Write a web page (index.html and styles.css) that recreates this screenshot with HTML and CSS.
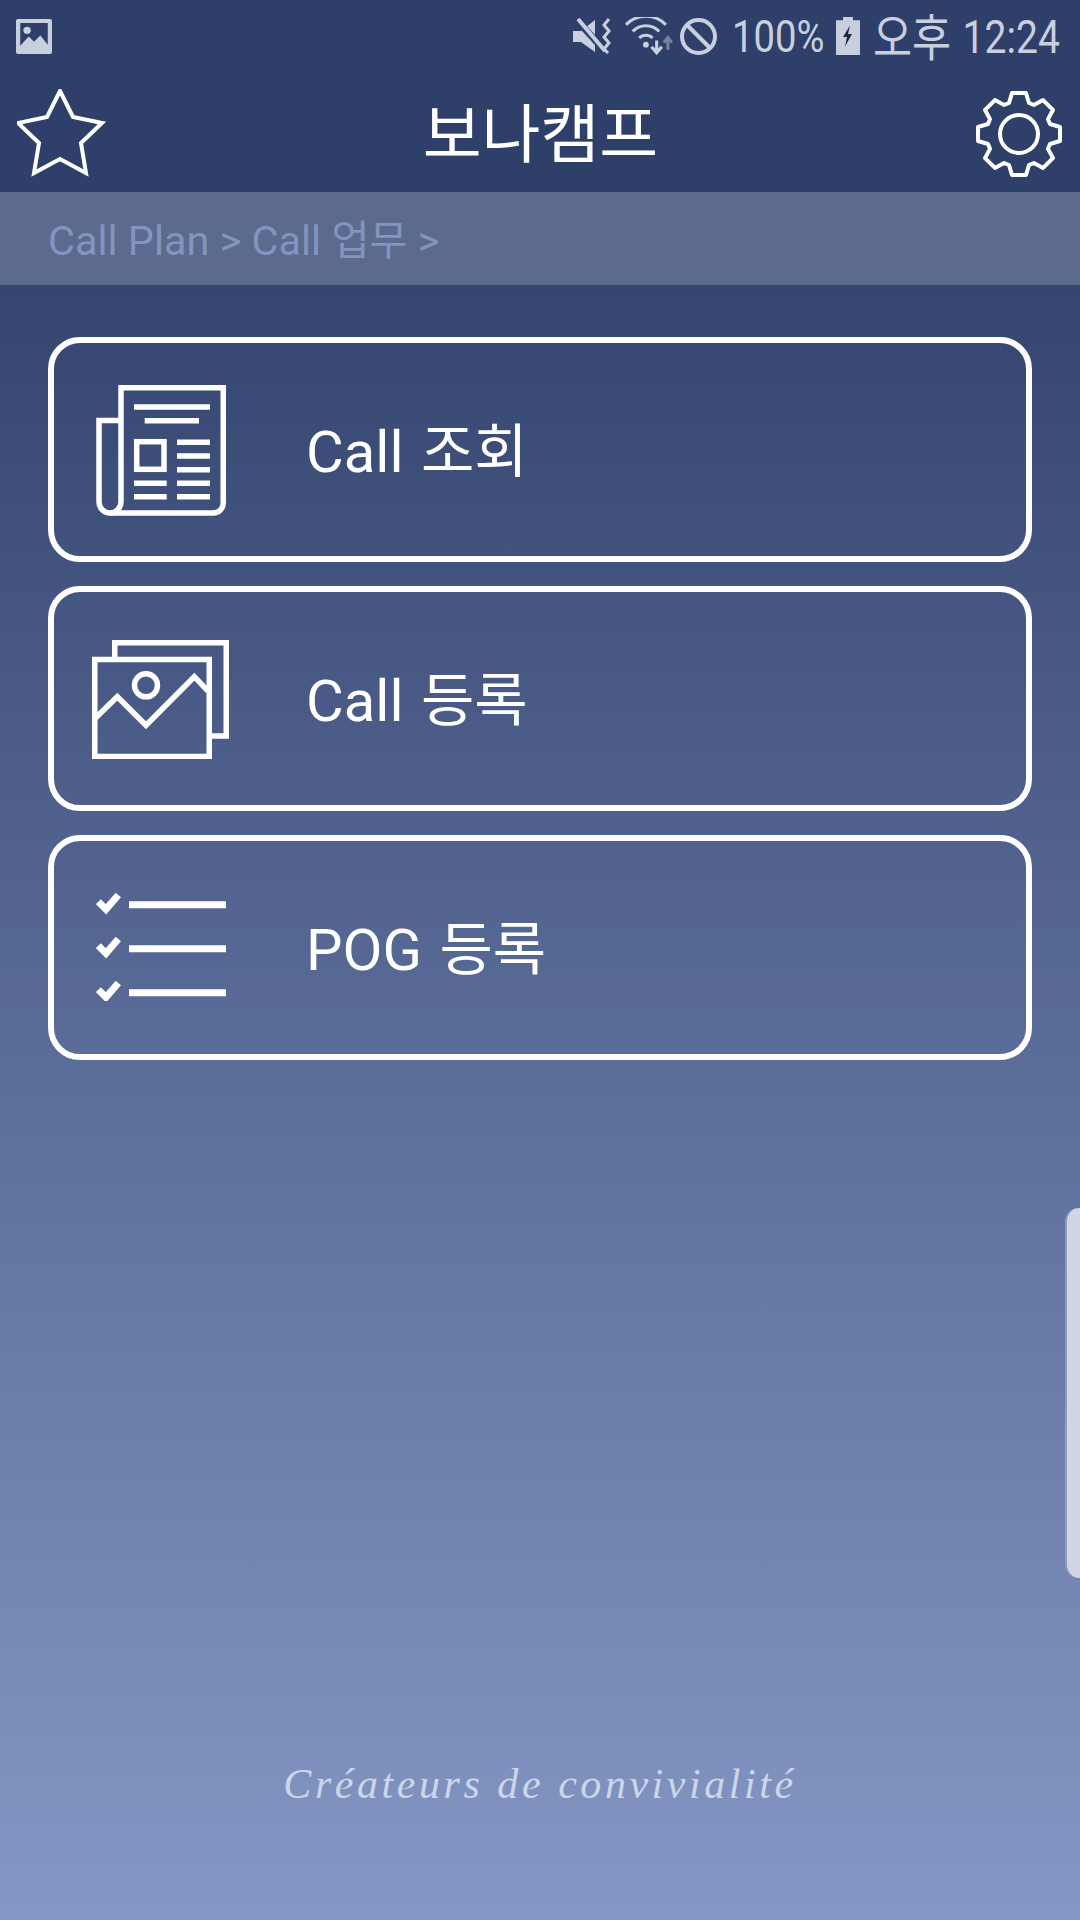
FILE: index.html
```html
<!DOCTYPE html>
<html lang="ko">
<head>
    <meta charset="UTF-8">
    <meta name="viewport" content="width=device-width, initial-scale=1.0">
    <title>보나캠프</title>
    <link rel="stylesheet" href="styles.css">
</head>
<body>
    <div id="app">
        <div id="top">
            <div id="status">
                <svg class="ico-picture" width="36" height="35" viewBox="0 0 34 34" preserveAspectRatio="none">
                    <rect width="34" height="34" rx="2" fill="#c9cfdf"/>
                    <path d="M4 4h26v21l-7-9-6 6-5-5-8 9z" fill="#2e4069"/>
                    <circle cx="10.500" cy="11" r="3.500" fill="#c9cfdf"/>
                </svg>
                <div id="statusRight">
                    <svg class="ico-mute" width="38" height="36" viewBox="0 0 38 36">
                        <path d="M0 13h8l14-11v32l-14-10h-8z" fill="#c9cfdf"/>
                        <path d="M2 0l30 33" stroke="#2e4069" stroke-width="7"/>
                        <path d="M5 1l27 32" stroke="#c9cfdf" stroke-width="4"/>
                        <path d="M36 1l-5 6 5 6-5 6 5 6-5 6 4 4" fill="none" stroke="#c9cfdf" stroke-width="3"/>
                    </svg>
                    <svg class="ico-wifi" width="49" height="38" viewBox="0 0 48 37">
                        <g fill="none" stroke="#c9cfdf" stroke-width="3">
                            <path d="M1 7.500a27 27 0 0 1 39 0"/>
                            <path d="M7.500 14a18 18 0 0 1 26 0"/>
                            <path d="M14 20.500a9 9 0 0 1 13 0"/>
                        </g>
                        <circle cx="20.500" cy="27" r="2.800" fill="#c9cfdf"/>
                        <path d="M31 23v12M26 29l5 6 5-6" fill="none" stroke="#c9cfdf" stroke-width="3"/>
                        <path d="M42 32v-11M38 25l4-5 4 5" fill="none" stroke="#75819f" stroke-width="3"/>
                    </svg>
                    <svg class="ico-block" width="37" height="37" viewBox="0 0 37 37">
                        <circle cx="18.500" cy="18.500" r="16.500" fill="none" stroke="#c9cfdf" stroke-width="4"/>
                        <path d="M7 7l23 23" stroke="#c9cfdf" stroke-width="4"/>
                    </svg>
                    <span class="status-text pct">100%</span>
                    <svg class="ico-battery" width="24" height="38" viewBox="0 0 24 36" preserveAspectRatio="none">
                        <path d="M7 0h10v3h7v33h-24v-33h7z" fill="#c9cfdf"/>
                        <path d="M14 8l-7 11h4l-2 9 7-12h-4z" fill="#1c2740"/>
                    </svg>
                    <span class="status-text clock"><span class="ampm">오후</span> 12:24</span>
                </div>
            </div>
            <header id="titleBar">
                <svg width="90" height="90" viewBox="0 0 90 90">
                    <path d="M43 2l13 26 29 6-21 20 5 30-26-14-26 14 5-30-21-20 29-6z" fill="none" stroke="#fff" stroke-width="4"/>
                </svg>
                <h1>보나캠프</h1>
                <svg width="90" height="90" viewBox="-45 -45 90 90">
                    <path d="M-10-31L-7-41L7-41L10-31L14.850-29L24.040-33.940L33.940-24.040L29-14.850L31-10L41-7L41 7L31 10L29 14.850L33.940 24.040L24.040 33.940L14.850 29L10 31L7 41L-7 41L-10 31L-14.850 29L-24.040 33.940L-33.940 24.040L-29 14.850L-31 10L-41 7L-41-7L-31-10L-29-14.850L-33.940-24.040L-24.040-33.940L-14.850-29Z" fill="none" stroke="#fff" stroke-width="4" stroke-linejoin="round"/>
                    <circle r="19" fill="none" stroke="#fff" stroke-width="4"/>
                </svg>
            </header>
        </div>
        <div id="main">
            <div id="crumb">Call Plan &gt; Call 업무 &gt;</div>
            <div id="menu">
                <a class="card">
                    <span class="card-icon icon-down">
                        <svg width="130" height="131" viewBox="0 0 130 131">
                            <g fill="none" stroke="#fff" stroke-width="5.500">
                                <path d="M25 117V2.750H127.250V118a10 10 0 0 1-10 10H14a11 11 0 0 1-11-11V35.500H25"/>
                                <path d="M25 117a11 11 0 0 1-11 11"/>
                                <path d="M38 22H114M48.700 35.700H103M81 57.300H114M81 71H114M81 84.700H114M81 98.300H114M81 111.700H114M38 98.300H70.700M38 111.700H70.700"/>
                                <rect x="40.700" y="56.700" width="27.300" height="27.600"/>
                            </g>
                        </svg>
                    </span>
                    <span class="card-label">Call 조회</span>
                </a>
                <a class="card">
                    <span class="card-icon icon-down icon-gallery">
                        <svg width="137" height="119" viewBox="0 0 137 119">
                            <g fill="none" stroke="#fff" stroke-width="5.500">
                                <rect x="2.750" y="19.500" width="114.500" height="97"/>
                                <path d="M22.750 17V2.750H134.250V96H120"/>
                                <circle cx="54" cy="45.300" r="11.500"/>
                                <path d="M3 78.500L25.300 56.700L54 85.300L102.300 36.700L116 51"/>
                            </g>
                        </svg>
                    </span>
                    <span class="card-label">Call 등록</span>
                </a>
                <a class="card">
                    <span class="card-icon icon-up">
                        <svg width="130" height="109" viewBox="0 0 130 109">
                            <g fill="none" stroke="#fff" stroke-width="7">
                                <path d="M33 12.700H130M33 56.700H130M33 100.700H130"/>
                                <path d="M2.300 9.700L10 17.300L22.300 3M2.300 53.700L10 61.300L22.300 47M2.300 97.700L10 105.300L22.300 91"/>
                            </g>
                        </svg>
                    </span>
                    <span class="card-label">POG 등록</span>
                </a>
            </div>
            <footer id="slogan">Créateurs de convivialité</footer>
        </div>
        <div id="edgeHandle"></div>
    </div>
</body>
</html>
```

FILE: styles.css
```css
html, body {
    margin: 0;
    padding: 0;
}
body {
    font-family: Roboto, "Noto Sans CJK KR", sans-serif;
    color: #fff;
}
#app {
    position: relative;
    display: flex;
    flex-direction: column;
    width: 1080px;
    height: 1920px;
    overflow: hidden;
}
#top {
    background: #2e4069;
    height: 192px;
}
#status {
    display: flex;
    justify-content: space-between;
    align-items: center;
    height: 72px;
    padding: 0 20px 0 16px;
}
#statusRight {
    display: flex;
    align-items: center;
}
.ico-mute {
    margin-right: 14px;
}
.ico-wifi {
    margin-right: 6px;
}
.ico-block {
    margin-right: 15px;
}
.status-text {
    display: inline-block;
    font-size: 46px;
    line-height: 74px;
    height: 72px;
    color: #c9cfdf;
    white-space: nowrap;
    transform: scaleX(0.85);
    transform-origin: left center;
}
.ampm {
    font-size: 50px;
    vertical-align: -3px;
}
.pct {
    width: 91px;
    margin-right: 13px;
    font-size: 45px;
}
.clock {
    width: 187px;
    margin-left: 13px;
    word-spacing: 2px;
}
#titleBar {
    display: flex;
    justify-content: space-between;
    align-items: center;
    box-sizing: border-box;
    height: 120px;
    padding: 4px 16px 0 17px;
}
#titleBar h1 {
    margin: 0;
    padding-top: 4px;
    font-size: 64px;
    font-weight: 400;
    line-height: 1;
}
#main {
    flex: 1;
    display: flex;
    flex-direction: column;
    background: linear-gradient(#2f416b, #8597c4);
}
#crumb {
    height: 93px;
    line-height: 98px;
    padding-left: 48px;
    font-size: 41.400px;
    color: #8294bf;
    background: #5c6b8d;
}
#menu {
    display: flex;
    flex-direction: column;
    gap: 24px;
    padding: 52px 48px 0;
}
.card {
    display: flex;
    align-items: center;
    box-sizing: border-box;
    height: 225px;
    border: 6px solid #fff;
    border-radius: 32px;
}
.card-icon {
    display: flex;
    justify-content: center;
    width: 214px;
}
.icon-down {
    margin-top: 2px;
}
.icon-up {
    margin-bottom: 2px;
}
.icon-gallery {
    width: 212px;
    padding-right: 2px;
}
.card-label {
    margin-left: 38px;
    padding-bottom: 5px;
    font-size: 58px;
    word-spacing: 3px;
}
#slogan {
    margin-top: auto;
    padding-bottom: 112px;
    text-align: center;
    font-family: "Liberation Serif", serif;
    font-style: italic;
    font-size: 42px;
    letter-spacing: 3.550px;
    color: #cdd6e8;
}
#edgeHandle {
    position: absolute;
    top: 1208px;
    right: 0;
    width: 13px;
    height: 370px;
    background: #d0d6e6;
    border-left: 2px solid #929db5;
    border-radius: 14px 0 0 14px;
}
```
